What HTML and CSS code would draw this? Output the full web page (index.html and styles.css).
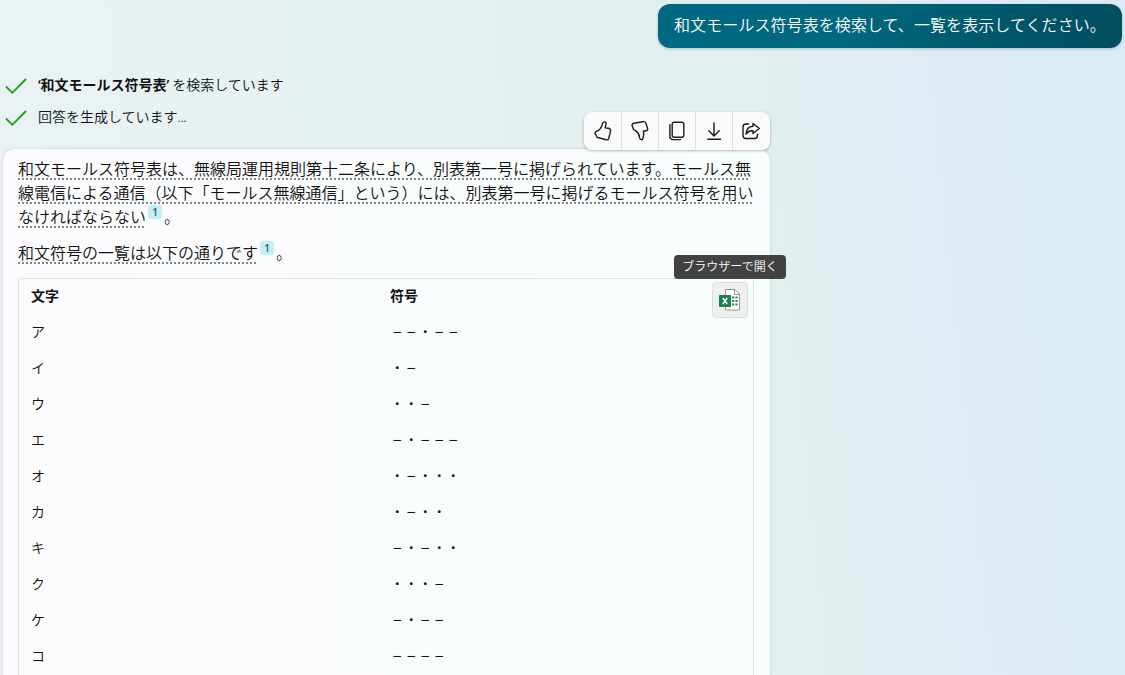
FILE: index.html
```html
<!DOCTYPE html>
<html lang="ja">
<head>
<meta charset="utf-8">
<title>モールス符号表</title>
<link rel="stylesheet" href="styles.css">
</head>
<body>
<main class="chat">
  <div class="user-row"><div class="user-bubble">和文モールス符号表を検索して、一覧を表示してください。</div></div>
  <div class="status-list">
    <div class="status"><svg class="check" viewBox="0 0 22 18"><path d="M1 9.5 7.3 15.8 21 2"/></svg><span><span class="quote">‘</span><b>和文モールス符号表</b><span class="quote">’ </span>を検索しています</span></div>
    <div class="status"><svg class="check" viewBox="0 0 22 18"><path d="M1 9.5 7.3 15.8 21 2"/></svg><span>回答を生成しています<span class="dots">...</span></span></div>
  </div>
  <section class="card">
    <div class="toolbar">
      <button class="tool"><svg viewBox="0 0 20 20"><path d="M11.600.9c1.200 0 1.600 1 1.400 2.200L12.200 6.900l3.300.4c1.700.3 2.400 1.400 2 3l-1.700 6.900c-.4 1.300-1.300 1.900-2.600 1.600l-8.600-2.300c-.8-.3-1-.7-1.200-1.400-.2-.9-.6-1.500-1.200-2.100-.5-1 .1-2.100 1.300-2.600C6.300 9.200 8 7.500 8.900 4.600l.8-2.500c.3-.8.900-1.200 1.900-1.200Z"/></svg></button>
      <button class="tool"><svg viewBox="0 0 20 20"><path d="M3.600 2.200 12.800.7c1.800-.3 2.700.3 3.200 1.800l1.500 4.700c.5 1.500-.2 2.400-1.700 2.600l-2.600.4c.6 1 .7 1.900.5 3.100l-.7 4c-.3 1.200-1 1.700-1.900 1.400-1-.3-1.500-1.100-1.600-2.200-.2-2.600-1-4.600-3.100-6.100L3.700 8.500c-.8-.7-.6-1.300-.8-2-.2-.7-.7-1.100-.8-1.900-.1-1.200.4-2.200 1.500-2.400Z"/></svg></button>
      <button class="tool"><svg viewBox="0 0 20 20"><rect x="5.200" y="1.200" width="11.600" height="15" rx="2"/><path d="M2.900 3.800v11.700c0 2 1.100 3.100 3.100 3.100h7.500"/></svg></button>
      <button class="tool"><svg viewBox="0 0 20 20"><path d="M10 2v12.500M4.800 9.800l5.200 5.100 5.200-5.100M3.800 18.200h12.700"/></svg></button>
      <button class="tool"><svg viewBox="0 0 20 20"><path d="M7.500 3H5C3 3 2 4 2 6v8.500c0 2 1 3 3 3h8.500c2 0 3-1 3-3v-1.300"/><path d="M12 2.500 18.300 7.500 12 12.500V9.800c-3.200-.2-5.200.9-7 3.200.3-4.600 2.700-7.500 7-7.800Z"/></svg></button>
    </div>
    <p class="para"><span class="cited">和文モールス符号表は、無線局運用規則第十二条により、別表第一号に掲げられています。モールス無線電信による通信（以下「モールス無線通信」という）には、別表第一号に掲げるモールス符号を用いなければならない</span><span class="cite">1</span>。</p>
    <p class="para"><span class="cited">和文符号の一覧は以下の通りです</span><span class="cite">1</span>。</p>
    <div class="table-box">
      <div class="excel">
        <svg viewBox="0 0 24 24"><path d="M7.500 1.500H17l4.500 4.500V22H7.500Z" fill="#fff" stroke="#959595"/><path d="M16.500 1.500V6.500h5" fill="none" stroke="#959595"/><path d="M14 9.500h2.200M17.400 9.500h2.200M14 13h2.200M17.400 13h2.200M14 16.500h2.200M17.400 16.500h2.200" stroke="#218a52" stroke-width="2"/><rect x="1" y="7" width="12" height="12" rx=".8" fill="#17834a"/><path d="m4.800 10 4.400 6M9.200 10l-4.400 6" stroke="#fff" stroke-width="1.500"/></svg>
        <div class="tip">ブラウザーで開く</div>
      </div>
      <table>
        <tr><th>文字</th><th>符号</th></tr>
        <tr><td>ア</td><td class="code">－－・－－</td></tr>
        <tr><td>イ</td><td class="code">・－</td></tr>
        <tr><td>ウ</td><td class="code">・・－</td></tr>
        <tr><td>エ</td><td class="code">－・－－－</td></tr>
        <tr><td>オ</td><td class="code">・－・・・</td></tr>
        <tr><td>カ</td><td class="code">・－・・</td></tr>
        <tr><td>キ</td><td class="code">－・－・・</td></tr>
        <tr><td>ク</td><td class="code">・・・－</td></tr>
        <tr><td>ケ</td><td class="code">－・－－</td></tr>
        <tr><td>コ</td><td class="code">－－－－</td></tr>
      </table>
    </div>
  </section>
</main>
</body>
</html>
```
FILE: styles.css
```css
* { box-sizing: border-box; }
body {
  margin: 0;
  height: 675px;
  overflow: hidden;
  font-family: "Noto Sans CJK JP", sans-serif;
  font-size: 16px;
  font-weight: 350;
  color: #111;
  background: linear-gradient(84deg, #eaf3f4 0%, #e6f1f2 35%, #e1efef 68%, #deecf3 80%, #daebf5 100%);
}
.chat { height: 675px; overflow: hidden; padding: 4px 3px 0; }
.user-row { display: flex; justify-content: flex-end; }
.user-bubble {
  width: 464px;
  height: 44px;
  padding: 0 16px;
  line-height: 41px;
  letter-spacing: .08px;
  color: #fff;
  white-space: nowrap;
  border-radius: 12px;
  background: linear-gradient(100deg, #006880 0%, #00687f 40%, #005264 85%, #004f61 100%);
  box-shadow: 0 1px 3px rgba(0, 0, 0, .2);
}
.status-list { padding: 21px 0 0 2px; }
.status { display: flex; align-items: center; gap: 11px; height: 32px; font-size: 14px; line-height: 20px; }
.status > span { margin-top: -2px; }
.check { width: 22px; height: 18px; margin-top: 1px; fill: none; stroke: #13a10e; stroke-width: 1.8; }
.quote { font-family: "Open Sans", sans-serif; font-size: 14px; font-weight: 600; letter-spacing: -.3px; line-height: 1; }
.dots { font-family: "Noto Sans", sans-serif; letter-spacing: -.6px; }
.card {
  position: relative;
  width: 767px;
  height: 600px;
  margin-top: 16px;
  padding: 7px 16px 0 15px;
  border-radius: 12px;
  background: linear-gradient(90deg, #fbfbfd 0%, #f9fcfc 55%, #f8fdfd 100%);
  box-shadow: 0 0 3px rgba(0, 0, 0, .16);
}
.toolbar {
  position: absolute;
  top: -37px;
  right: 0;
  display: flex;
  width: 186px;
  height: 38px;
  border-radius: 8px;
  background: #fafafa;
  box-shadow: 0 1px 3px rgba(0, 0, 0, .28);
}
.tool {
  display: flex;
  align-items: center;
  justify-content: center;
  width: 37px;
  padding: 0;
  border: 0;
  border-left: 1px solid #dedede;
  background: none;
}
.tool:first-child { border-left: 0; }
.tool svg { width: 20px; height: 20px; fill: none; stroke: #1b1b1b; stroke-width: 1.4; stroke-linejoin: round; stroke-linecap: round; }
.para { width: 740px; margin: 0 0 12px; line-height: 24px; }
.cited { text-decoration: underline dotted #858585 1.5px; text-underline-offset: 3px; text-decoration-skip-ink: none; }
.cite {
  display: inline-block;
  width: 14px;
  height: 14px;
  margin: 0 2px;
  position: relative;
  top: -4px;
  vertical-align: 3px;
  border-radius: 3px;
  background: #c5edf5;
  color: #146579;
  font: 600 10px/14px "Open Sans", sans-serif;
  text-align: center;
}
.table-box { position: relative; width: 736px; height: 500px; margin-top: 14px; border: 1px solid #dfe3e5; border-radius: 4px; }
table { width: 100%; margin-top: -2px; border-collapse: collapse; table-layout: fixed; font-size: 14px; line-height: 20px; }
th, td { width: 359px; height: 36px; padding: 0 12px; text-align: left; }
th:last-child, td:last-child { width: auto; }
td.code { padding: 2px 0 0 14px; font-size: 10.5px; letter-spacing: 3.5px; font-weight: 700; }
.excel {
  position: absolute;
  top: 3px;
  right: 5px;
  display: flex;
  align-items: center;
  justify-content: center;
  width: 36px;
  height: 36px;
  border: 1px solid #dcdede;
  border-radius: 4px;
  background: #eeefef;
}
.excel svg { width: 24px; height: 24px; }
.tip {
  position: absolute;
  top: -28px;
  right: -39px;
  width: 112px;
  height: 24px;
  border-radius: 4px;
  background: #424242;
  color: #fff;
  font-size: 12px;
  line-height: 22px;
  text-align: center;
  white-space: nowrap;
}
```
